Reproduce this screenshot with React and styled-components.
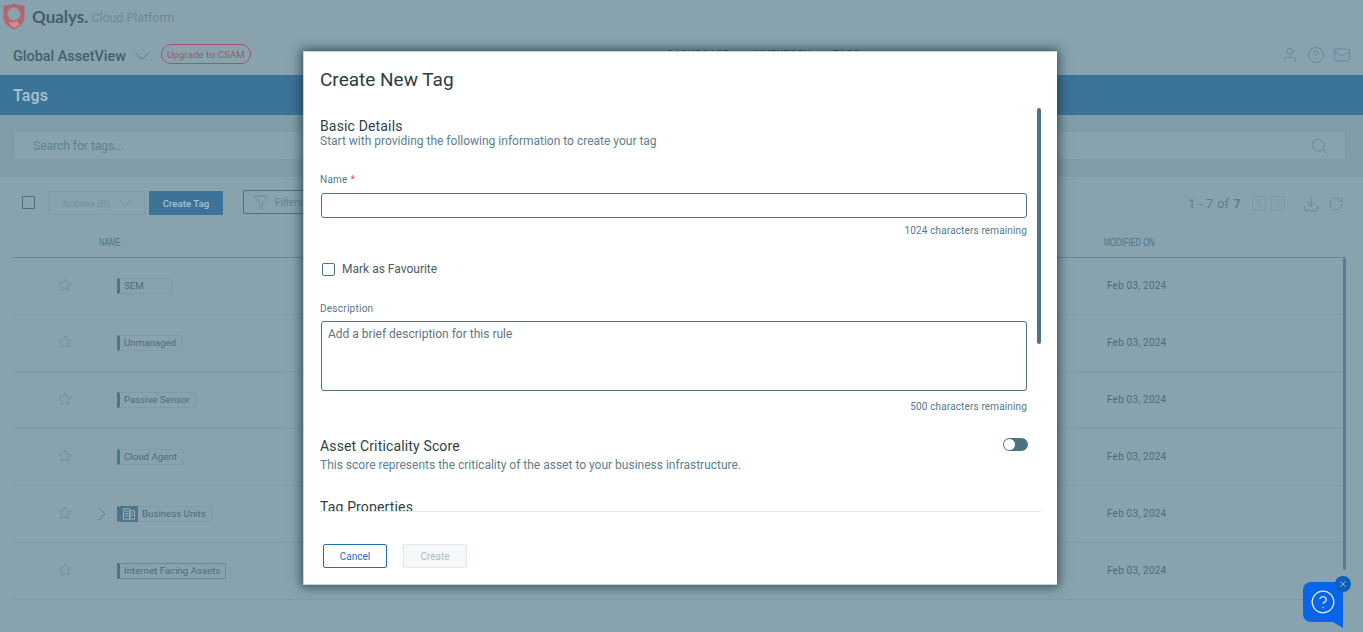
import React from "react";
import styled, { createGlobalStyle } from "styled-components";
import { Star, ChevronDown, ChevronRight, ChevronLeft, Search, User, CircleHelp, Mail, Download, RotateCw, Funnel, X } from "lucide-react";

const Global = createGlobalStyle`
  html, body { margin: 0; padding: 0; height: 100%; overflow: hidden; }
  body { font-family: Roboto, "Liberation Sans", sans-serif; background: #88a3ae; }
  * { box-sizing: border-box; }
  svg { flex-shrink: 0; }
`;

const Page = styled.div`
  position: relative; width: 1363px; height: 632px; overflow: hidden; background: #88a3ae;
  display: flex; flex-direction: column;
`;
const BrandBar = styled.div`height: 36px; display: flex; align-items: center; padding: 0 0 4px 3px; gap: 7px;`;
const BrandName = styled.span`font-family: Lato, Roboto, sans-serif; font-size: 17px; font-weight: 700; color: #43606d;`;
const BrandSub = styled.span`font-size: 12.4px; color: #6b8997; margin-left: -4px; padding-top: 3px;`;
const AppBar = styled.div`height: 39px; display: flex; align-items: center; padding: 0 12px 0 13px; position: relative;`;
const AppName = styled.span`font-size: 14.4px; font-weight: 500; color: #43606d; margin-right: 9px; padding-top: 2px;`;
const AppChevron = styled.span`display: flex; margin: 0 -6px; color: #4f7a92;`;
const Pill = styled.span`
  margin-left: 12px; height: 20px; width: 90px; border: 1px solid #a3566a; border-radius: 10px; margin-top: -3px;
  font-size: 9.6px; color: #985a6b; display: flex; align-items: center; justify-content: center; letter-spacing:.15px;
`;
const Nav = styled.nav`position: absolute; left: 667px; top: 13px; display: flex; gap: 22px; font-size: 10px; font-weight: 500; color: #43606d; letter-spacing: .5px;`;
const AppIcons = styled.div`margin-left: auto; display: flex; gap: 8px; color: #55809b; align-items: center; margin-top: -1px;`;
const TitleBand = styled.div`height: 40px; background: #3c7399; color: #a9c3d0; font-size: 16px; font-weight: 500; display: flex; align-items: center; padding-left: 13px; letter-spacing:.1px;`;
const SearchBand = styled.div`height: 62px; background: #7f9ca7; padding: 16px 17px 17px 13px;`;
const SearchBox = styled.div`
  height: 29px; background: #88a3ae; border: 1px solid #7a9aa9; display: flex; align-items: center; justify-content: space-between;
  padding: 0 17px 0 19px; font-size: 12px; color: #5f8191;
  svg { color: #5f8191; }
`;
const Toolbar = styled.div`height: 56px; padding: 14px 19px 0 22px; display: flex; align-items: flex-start;`;
const Check = styled.span`width: 13px; height: 13px; border: 1px solid #47707f; border-radius: 1px; margin-top: 5px; margin-right: 13px;`;
const GhostButton = styled.span`
  width: 97px; height: 24px; border: 1px solid #7e9ba8; border-radius: 1px; display: flex; align-items: center; justify-content: center; gap: 9px;
  font-size: 9.7px; color: #6f909e; margin-right: 4px; svg { color: #6a8d9c; margin: 0 -5px; }
`;
const PrimaryButton = styled.span`width: 74px; height: 24px; background: #3c7399; border-radius: 1px; color: #a9c3d0; font-size: 9.7px; font-weight: 500; display: flex; align-items: center; justify-content: center;`;
const FilterButton = styled.span`
  margin-left: 20px; margin-top: -1px; height: 24px; width: 90px; border: 1px solid #48707f; border-radius: 2px; display: flex; align-items: center; gap: 6px; padding-left: 9px;
  font-size: 10px; color: #5f8191; svg { color: #55809b; }
`;
const Pager = styled.div`margin-left: auto; display: flex; align-items: center; height: 24px; font-size: 13px; color: #5f7f8e; letter-spacing: .2px; padding-top:1px;`;
const PagerCount = styled.b`font-weight: 700; margin-left: 4px; margin-right: 11px;`;
const PageBox = styled.span`width: 14px; height: 15px; border: 1px solid #7a9aa9; margin: -1px 5px 0 0; display: flex; align-items: center; justify-content: center; color: #6a8e9e; svg { margin: -3px; }`;
const PagerIcons = styled.div`display: flex; gap: 8px; color: #55809b; margin-left: 12px; align-items:center;`;
const TableHead = styled.div`
  margin: 0 17px 0 13px; height: 25px; border-bottom: 1px solid #64889a; display: grid; grid-template-columns: 86px 1fr 242px; align-items: center; padding-bottom: 6px;
`;
const HeadCell = styled.span`font-family: "Liberation Sans Narrow", "Liberation Sans", sans-serif; font-size: 11px; color: #527585; text-transform: uppercase; display: block; transform: scaleX(.69); transform-origin: left center; white-space: nowrap;`;
const Rows = styled.div`margin: 0 17px 0 13px; position: relative;`;
const Row = styled.div`
  height: 57px; border-bottom: 1px solid #7d9aa6; display: grid; grid-template-columns: 45px 14px 25px 20px 1fr 239px; align-items: center;
`;
const StarCell = styled.span`grid-column: 2; display: flex; color: #5b8298; margin-top: -2px;`;
const Expander = styled.span`grid-column: 4; display: flex; color: #55809b; margin-left: -7px;`;
const TagCell = styled.span`grid-column: 5; display: flex;`;
const TagChip = styled.span`
  height: 16px; min-width: 55px; border: 1px solid ${p => (p.$strong ? "#5b8ea8" : "#7d9cab")}; border-left: 3px solid #4e7487; padding: 0 5px 2px 4px; display: flex; align-items: center;
  font-size: 9.7px; color: #4a6c7c; white-space: nowrap;
`;
const ChipIcon = styled.span`width: 18px; height: 16px; margin: -1px 4px -3px -4px; background: #4e7487; display: flex; align-items: center; justify-content: center; color: #9fb9c4;`;
const DateCell = styled.span`grid-column: 6; font-size: 10px; color: #4f6c79; letter-spacing: .2px; margin-top: -1px;`;
const PageScroll = styled.span`position: absolute; left: 1343px; top: 258px; width: 3px; height: 312px; background: #567c8d; border-radius: 2px;`;

const Help = styled.div`
  position: absolute; left: 1303px; top: 582px; width: 40px; height: 40px; background: #0a64e8; color: #dbe8fb;
  border-radius: 8px 0 0 8px; display: flex; align-items: center; justify-content: center;
  &::after { content: ""; position: absolute; right: 0; bottom: -6px; border-style: solid; border-width: 6px 0 0 10px; border-color: #0a64e8 transparent transparent transparent; }
`;
const HelpClose = styled.span`position: absolute; left: 1335px; top: 576px; width: 16px; height: 16px; border-radius: 50%; background: #0b5fb5; color: #dbe8fb; display: flex; align-items: center; justify-content: center;`;

const Modal = styled.div`
  position: absolute; left: 303px; top: 51px; width: 754px; height: 534px; background: #fff; border: 1px solid #c5d3d9; border-width: 1px 0 1px 1px;
  box-shadow: 0 0 10px 2px rgba(20, 45, 55, .7); display: flex; flex-direction: column; padding-left: 16px;
`;
const ModalTitle = styled.h2`margin: 17px 0 0; height: 39px; font-size: 19px; line-height: 22px; font-weight: 400; color: #2c3c45;`;
const ModalBody = styled.div`height: 404px; margin-right: 16px; border-bottom: 1px solid #e3e8ea; overflow: hidden; padding-top: 10px; position: relative; padding-right: 13px;`;
const ModalScroll = styled.span`position: absolute; right: 0; top: 0; width: 4px; height: 236px; background: #4d7383; border-radius: 2px;`;
const SectionTitle = styled.div`font-size: 14px; line-height: 16px; color: #2f3f48; letter-spacing: .15px; margin-top: ${p => p.$top || 0}px;`;
const SectionSub = styled.div`font-size: 12px; line-height: 14px; color: #5a8193; margin-top: ${p => p.$top || 0}px;`;
const FieldLabel = styled.label`display: block; font-size: 10px; line-height: 12px; color: #567889; letter-spacing: .25px; margin-top: ${p => p.$top}px; span { color: #e8505b; }`;
const NameInput = styled.div`margin: 7px 1px 0 1px; height: 25px; border: 1px solid #4d7383; border-radius: 3px;`;
const Remaining = styled.div`font-size: 10px; line-height: 12px; text-align: right; color: #567889; letter-spacing: .14px; margin-right: 1px; margin-top: ${p => p.$top}px;`;
const CheckRow = styled.div`display: flex; align-items: center; gap: 7px; margin: 25px 0 0 3px; font-size: 12px; color: #4a5b65; height: 14px;`;
const Box = styled.span`width: 13px; height: 13px; border: 1px solid #4d7383; border-radius: 2px; margin-left: -1px;`;
const TextArea = styled.div`margin: 6px 1px 0 1px; height: 70px; border: 1px solid #4d7383; border-radius: 3px; padding: 5px 6px; font-size: 12px; line-height: 14px; color: #64747c;`;
const ScoreRow = styled.div`display: flex; justify-content: space-between; margin-top: 25px;`;
const Toggle = styled.span`width: 25px; height: 13px; border-radius: 7px; background: #4d7383; position: relative;
  &::before { content: ""; position: absolute; left: 1px; top: 1px; width: 11px; height: 11px; border-radius: 50%; background: #fff; }
`;
const ModalFooter = styled.div`display: flex; gap: 16px; padding: 32px 0 0 3px;`;
const CancelBtn = styled.span`width: 64px; height: 24px; border: 1px solid #1f6fb5; border-radius: 2px; color: #1f6fb5; font-size: 10px; display: flex; align-items: center; justify-content: center;`;
const CreateBtn = styled.span`width: 64px; height: 24px; border: 1px solid #e3e8ea; background: #f6f7f8; border-radius: 2px; color: #aebcc4; font-size: 10px; display: flex; align-items: center; justify-content: center;`;

const Logo = () => (
  <svg width="22" height="27" viewBox="0 0 22 27">
    <path d="M11 0.5C7.5 2 4 2.6 0.5 2.6V14C0.5 20 5 24 11 26.5C17 24 21.5 20 21.5 14V2.6C18 2.6 14.5 2 11 0.5Z" fill="#b4636f" />
    <circle cx="11" cy="11" r="6.5" fill="#88a3ae" />
    <path d="M5.5 18.5C8 19.5 11 19.5 14 18L17 21.5L11 25C8.5 23.8 7 21.5 5.5 18.5Z" fill="#c98d96" />
  </svg>
);
const Building = () => (
  <svg width="14" height="14" viewBox="0 0 15 14" fill="none" stroke="currentColor" strokeWidth="1">
    <path d="M1.5 1.5h7v11h-7zM8.5 3.5h5v9h-5zM3 4h4M3 6.5h4M3 9h4M10 6h2M10 8.5h2" />
  </svg>
);

const rows = [
  { name: "SEM" },
  { name: "Unmanaged" },
  { name: "Passive Sensor" },
  { name: "Cloud Agent" },
  { name: "Business Units", icon: true },
  { name: "Internet Facing Assets", strong: true },
];

export default function App() {
  return (
    <Page>
      <Global />
      <BrandBar>
        <Logo />
        <BrandName>Qualys.</BrandName>
        <BrandSub>Cloud Platform</BrandSub>
      </BrandBar>
      <AppBar>
        <AppName>Global AssetView</AppName>
        <AppChevron><ChevronDown size={26} strokeWidth={0.9} /></AppChevron>
        <Pill>Upgrade to CSAM</Pill>
        <Nav><span>DASHBOARD</span><span>INVENTORY</span><span>TAGS</span></Nav>
        <AppIcons>
          <User size={18} strokeWidth={1} />
          <CircleHelp size={18} strokeWidth={1} />
          <Mail size={18} strokeWidth={1} />
        </AppIcons>
      </AppBar>
      <TitleBand>Tags</TitleBand>
      <SearchBand>
        <SearchBox>
          Search for tags...
          <Search size={18} strokeWidth={1} />
        </SearchBox>
      </SearchBand>
      <Toolbar>
        <Check />
        <GhostButton>Actions (0) <ChevronDown size={22} strokeWidth={1} /></GhostButton>
        <PrimaryButton>Create Tag</PrimaryButton>
        <FilterButton><Funnel size={16} strokeWidth={1} />Filters</FilterButton>
        <Pager>
          1 - 7 of <PagerCount>7</PagerCount>
          <PageBox><ChevronLeft size={18} strokeWidth={1} /></PageBox>
          <PageBox><ChevronRight size={18} strokeWidth={1} /></PageBox>
          <PagerIcons>
            <Download size={18} strokeWidth={1} />
            <RotateCw size={16} strokeWidth={1} />
          </PagerIcons>
        </Pager>
      </Toolbar>
      <TableHead>
        <span />
        <HeadCell>Name</HeadCell>
        <HeadCell>Modified On</HeadCell>
      </TableHead>
      <Rows>
        {rows.map(r => (
          <Row key={r.name}>
            <StarCell><Star size={14} strokeWidth={1} /></StarCell>
            {r.icon && <Expander><ChevronRight size={24} strokeWidth={1} /></Expander>}
            <TagCell>
              <TagChip $strong={r.strong}>
                {r.icon && <ChipIcon><Building /></ChipIcon>}
                {r.name}
              </TagChip>
            </TagCell>
            <DateCell>Feb 03, 2024</DateCell>
          </Row>
        ))}
      </Rows>
      <PageScroll />
      <Help><CircleHelp size={26} strokeWidth={1.2} /></Help>
      <HelpClose><X size={10} strokeWidth={1.5} /></HelpClose>
      <Modal>
        <ModalTitle>Create New Tag</ModalTitle>
        <ModalBody>
          <ModalScroll />
          <SectionTitle>Basic Details</SectionTitle>
          <SectionSub>Start with providing the following information to create your tag</SectionSub>
          <FieldLabel $top={26}>Name <span>*</span></FieldLabel>
          <NameInput />
          <Remaining $top={7}>1024 characters remaining</Remaining>
          <CheckRow><Box />Mark as Favourite</CheckRow>
          <FieldLabel $top={27}>Description</FieldLabel>
          <TextArea>Add a brief description for this rule</TextArea>
          <Remaining $top={10}>500 characters remaining</Remaining>
          <ScoreRow>
            <SectionTitle>Asset Criticality Score</SectionTitle>
            <Toggle />
          </ScoreRow>
          <SectionSub $top={4}>This score represents the criticality of the asset to your business infrastructure.</SectionSub>
          <SectionTitle $top={27}>Tag Properties</SectionTitle>
        </ModalBody>
        <ModalFooter>
          <CancelBtn>Cancel</CancelBtn>
          <CreateBtn>Create</CreateBtn>
        </ModalFooter>
      </Modal>
    </Page>
  );
}
